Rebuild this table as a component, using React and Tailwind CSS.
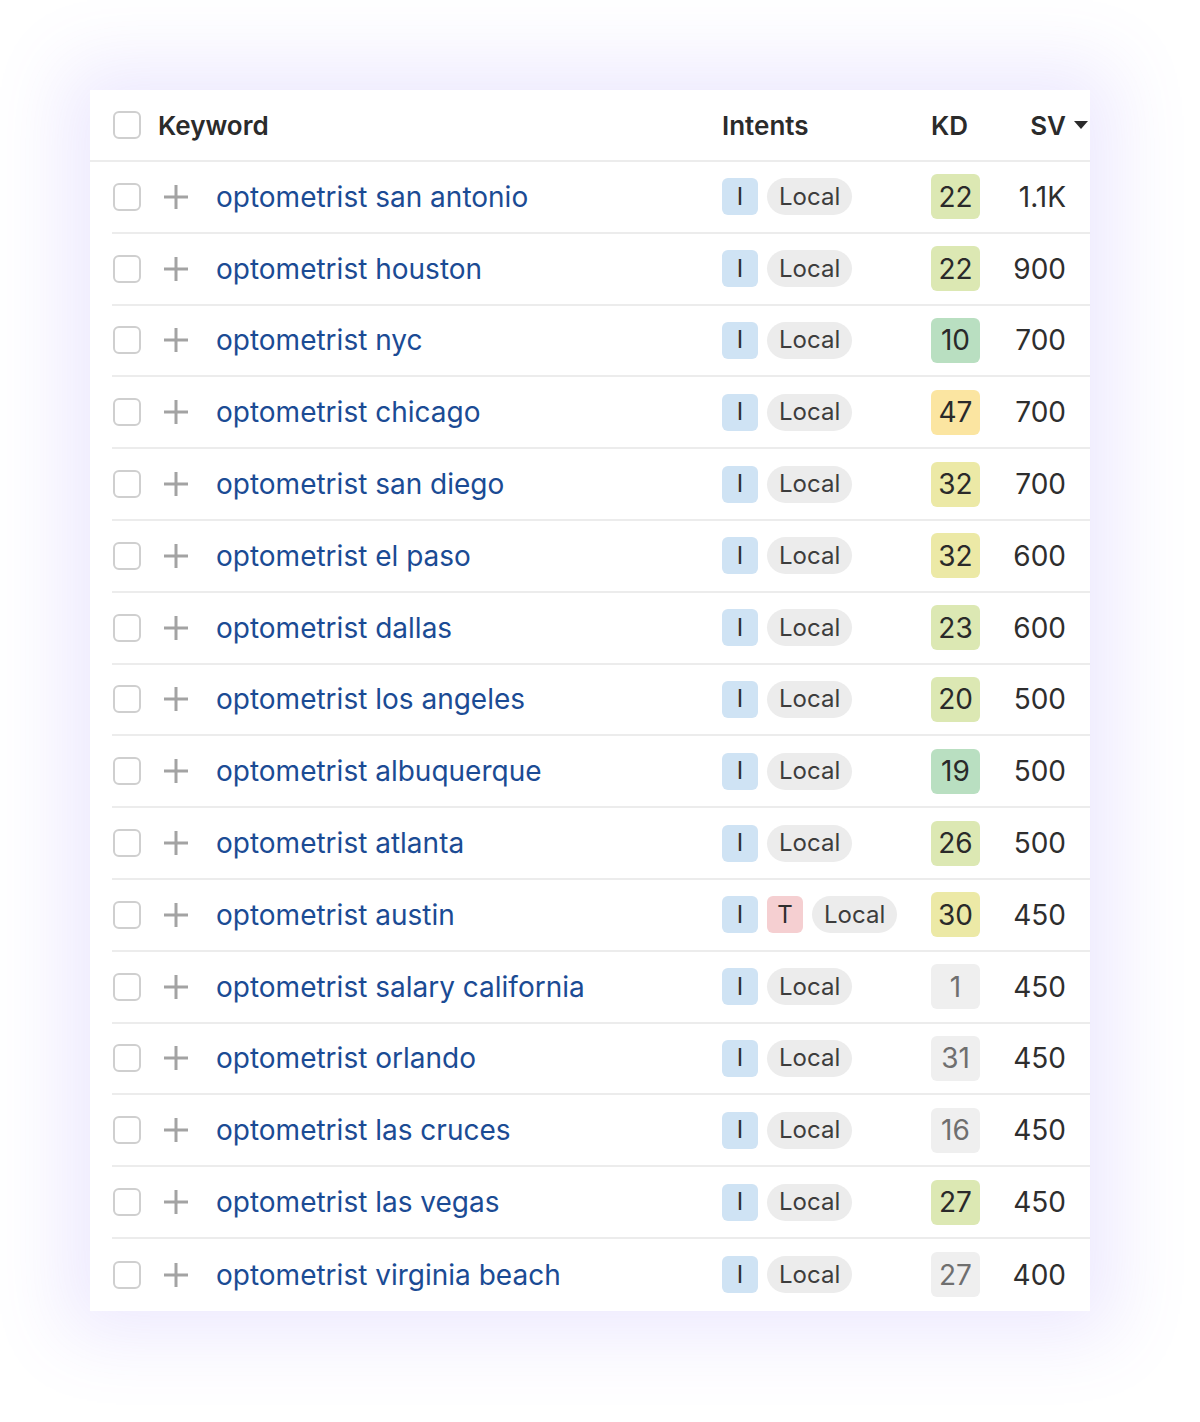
import React from 'react'

const rows = [
  { kw: 'optometrist san antonio', kd: 22, sv: '1.1K' },
  { kw: 'optometrist houston', kd: 22, sv: '900' },
  { kw: 'optometrist nyc', kd: 10, sv: '700' },
  { kw: 'optometrist chicago', kd: 47, sv: '700' },
  { kw: 'optometrist san diego', kd: 32, sv: '700' },
  { kw: 'optometrist el paso', kd: 32, sv: '600' },
  { kw: 'optometrist dallas', kd: 23, sv: '600' },
  { kw: 'optometrist los angeles', kd: 20, sv: '500' },
  { kw: 'optometrist albuquerque', kd: 19, sv: '500' },
  { kw: 'optometrist atlanta', kd: 26, sv: '500' },
  { kw: 'optometrist austin', kd: 30, sv: '450', t: true },
  { kw: 'optometrist salary california', kd: 1, sv: '450', gray: true },
  { kw: 'optometrist orlando', kd: 31, sv: '450', gray: true },
  { kw: 'optometrist las cruces', kd: 16, sv: '450', gray: true },
  { kw: 'optometrist las vegas', kd: 27, sv: '450' },
  { kw: 'optometrist virginia beach', kd: 27, sv: '400', gray: true },
]

function kdClass(r) {
  if (r.gray) return 'bg-[#efefef] text-[#6f6f6f]'
  if (r.kd <= 19) return 'bg-[#b9dfc1] text-[#2a2a2a]'
  if (r.kd <= 29) return 'bg-[#dce8b3] text-[#2a2a2a]'
  if (r.kd <= 39) return 'bg-[#ece9a6] text-[#2a2a2a]'
  return 'bg-[#fbe5a1] text-[#2a2a2a]'
}

function Checkbox() {
  return <div className="w-[28px] h-[28px] rounded-[6px] border-2 border-[#cfcfcf] bg-white shrink-0" />
}

function Plus() {
  return (
    <svg width="26" height="26" viewBox="0 0 26 26" className="shrink-0">
      <path d="M13 1v24M1 13h24" stroke="#a3a3a3" strokeWidth="3" />
    </svg>
  )
}

export default function App() {
  return (
    <div className="min-h-[1422px] bg-white pt-[90px] pl-[90px] font-['Inter',sans-serif]">
      <div className="w-[1000px] bg-white shadow-[0_0_70px_25px_rgba(130,100,245,0.14)]">
        {/* Header */}
        <div className="grid grid-cols-[632px_209px_49px_86px_24px] items-center h-[72px] border-b-[2px] border-[#ececec]">
          <div className="flex items-center pl-[23px]">
            <Checkbox />
            <span className="ml-[17px] text-[26px] font-semibold text-[#2b2b2b]">Keyword</span>
          </div>
          <span className="text-[26px] font-semibold text-[#2b2b2b]">Intents</span>
          <span className="text-[26px] font-semibold text-[#2b2b2b] whitespace-nowrap">KD</span>
          <div className="flex items-center justify-end relative">
            <span className="text-[26px] font-semibold text-[#2b2b2b]">SV</span>
            <svg width="16" height="10" viewBox="0 0 16 10" className="absolute -right-[23px] top-[14px]">
              <path d="M1 1h14L8 9z" fill="#2b2b2b" />
            </svg>
          </div>
          <div />
        </div>

        {/* Rows */}
        <div className="pl-[22px]">
          {rows.map((r, i) => (
            <div
              key={r.kw}
              className={`grid grid-cols-[610px_209px_49px_86px_24px] items-center h-[71.8px] ${
                i < rows.length - 1 ? 'border-b-[2px] border-[#ececec]' : ''
              }`}
            >
              <div className="flex items-center pl-px">
                <Checkbox />
                <div className="ml-[22px]"><Plus /></div>
                <span className="ml-[27px] text-[28px] text-[#1b4b94] whitespace-nowrap">{r.kw}</span>
              </div>
              <div className="flex items-center gap-[9px]">
                <span className="w-[36px] h-[37px] rounded-[6px] bg-[#cfe3f4] flex items-center justify-center text-[24px] text-[#2e2e2e]">I</span>
                {r.t && (
                  <span className="w-[36px] h-[37px] rounded-[6px] bg-[#f5cfd1] flex items-center justify-center text-[24px] text-[#2e2e2e]">T</span>
                )}
                <span className="h-[37px] px-[12px] rounded-full bg-[#ececec] flex items-center text-[24px] text-[#3d3d3d]">Local</span>
              </div>
              <span className={`w-[49px] h-[45px] rounded-[6px] flex items-center justify-center text-[28px] ${kdClass(r)}`}>
                {r.kd}
              </span>
              <span className="text-right text-[28px] text-[#2e2e2e]">{r.sv}</span>
              <div />
            </div>
          ))}
        </div>
      </div>
    </div>
  )
}
